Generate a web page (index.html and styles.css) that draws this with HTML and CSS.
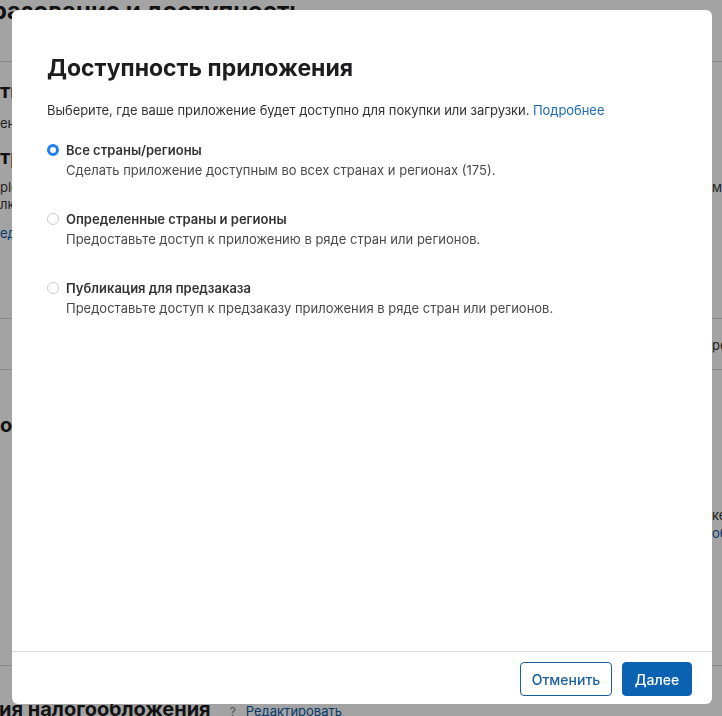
FILE: index.html
```html
<!DOCTYPE html>
<html lang="ru">
<head>
<meta charset="utf-8">
<title>Доступность приложения</title>
<link rel="stylesheet" href="styles.css">
</head>
<body>
<div class="page">
  <div class="page-head">
    <h1 class="page-title">Ценообразование и доступность</h1>
  </div>
  <div class="row row-a"><span class="sub-h">тн</span><span></span></div>
  <div class="row row-b"><span class="txt">ена</span><span></span></div>
  <div class="row row-c"><span class="sub-h">тр</span><span></span></div>
  <div class="row row-d"><span class="txt">ple</span><span class="txt">м</span></div>
  <div class="row row-e"><span class="txt">лк</span><span></span></div>
  <div class="row row-f"><span class="lnk">еда</span><span></span></div>
  <div class="row row-g"><span></span><span class="txt">ре</span></div>
  <div class="row row-h"><span class="sub-h">ос</span><span></span></div>
  <div class="row row-i"><span></span><span class="txt">ке</span></div>
  <div class="row row-j"><span></span><span class="lnk">об</span></div>
  <div class="row row-k">
    <span class="tax"><span class="tax-title">ия налогообложения</span><span class="help">?</span><span class="lnk edit">Редактировать</span></span>
    <span></span>
  </div>
</div>

<div class="overlay"></div>

<div class="modal" role="dialog" aria-labelledby="dlg-title">
  <div class="modal-body">
    <h2 class="title" id="dlg-title">Доступность приложения</h2>
    <p class="lead">Выберите, где ваше приложение будет доступно для покупки или загрузки. <a class="link" href="#">Подробнее</a></p>
    <div class="options">
      <label class="option">
        <span class="radio radio-on"></span>
        <span class="opt-text">
          <span class="opt-title">Все страны/регионы</span>
          <span class="opt-desc">Сделать приложение доступным во всех странах и регионах (175).</span>
        </span>
      </label>
      <label class="option">
        <span class="radio"></span>
        <span class="opt-text">
          <span class="opt-title">Определенные страны и регионы</span>
          <span class="opt-desc">Предоставьте доступ к приложению в ряде стран или регионов.</span>
        </span>
      </label>
      <label class="option">
        <span class="radio"></span>
        <span class="opt-text">
          <span class="opt-title">Публикация для предзаказа</span>
          <span class="opt-desc">Предоставьте доступ к предзаказу приложения в ряде стран или регионов.</span>
        </span>
      </label>
    </div>
  </div>
  <div class="modal-foot">
    <button class="btn btn-secondary" type="button">Отменить</button>
    <button class="btn btn-primary" type="button">Далее</button>
  </div>
</div>
</body>
</html>
```
FILE: styles.css
```css
* { box-sizing: border-box; }
html, body { margin: 0; padding: 0; }
body {
  width: 722px;
  height: 716px;
  overflow: hidden;
  background: #ffffff;
  font-family: Inter, "Noto Sans", "Liberation Sans", sans-serif;
  color: #1d1d1f;
}

/* ---------- background page ---------- */
.page { width: 722px; height: 716px; overflow: hidden; white-space: nowrap; }
.page-head {
  height: 62px;
  border-bottom: 1px solid #d2d2d7;
  overflow: hidden;
}
.page-title {
  margin: -4px 0 0 -100px;
  font-size: 24px;
  line-height: 30px;
  font-weight: 700;
}
.row {
  display: grid;
  grid-template-columns: 712px 1fr;
  overflow: hidden;
}
.sub-h { font-size: 20px; font-weight: 700; line-height: 24px; }
.txt { font-size: 13px; line-height: 18px; color: #333; }
.lnk { font-size: 13px; line-height: 18px; color: #0b5cab; }

.row-a { margin-top: 17px; height: 24px; }
.row-b { margin-top: 11px; height: 18px; }
.row-c { margin-top: 13px; height: 24px; }
.row-d { margin-top: 9px; height: 17px; }
.row-e { height: 18px; }
.row-f { margin-top: 11px; height: 18px; }
.row-g {
  margin-top: 76px;
  height: 52px;
  padding-top: 17px;
  border-top: 1px solid #d2d2d7;
  border-bottom: 1px solid #d2d2d7;
}
.row-h { margin-top: 43px; height: 24px; }
.row-i { margin-top: 69px; height: 18px; }
.row-j { height: 18px; }
.row-k {
  margin-top: 123px;
  border-top: 1px solid #d2d2d7;
  padding-top: 31px;
  height: 60px;
}
.tax { display: flex; align-items: baseline; }
.tax-title { font-size: 20px; font-weight: 700; line-height: 24px; margin-left: -1px; }
.help { font-size: 12px; color: #888; margin-left: 19px; }
.edit { font-size: 13px; margin-left: 10px; }

.overlay {
  position: fixed;
  inset: 0;
  background: rgba(0, 0, 0, 0.36);
}

/* ---------- modal ---------- */
.modal {
  position: fixed;
  left: 12px;
  top: 10px;
  width: 700px;
  height: 694px;
  background: #ffffff;
  border-radius: 6px;
  display: flex;
  flex-direction: column;
  overflow: hidden;
}
.modal-body {
  flex: 1;
  padding: 43px 35px 0;
}
.title {
  margin: 0;
  font-size: 23px;
  line-height: 30px;
  font-weight: 700;
  color: #1d1d1f;
}
.lead {
  margin: 18px 0 0;
  font-size: 13px;
  line-height: 18px;
  letter-spacing: -0.05px;
  color: #333333;
}
.link { color: #1f6bb5; text-decoration: none; }

.options {
  margin-top: 22px;
  display: flex;
  flex-direction: column;
  gap: 31px;
}
.option {
  display: grid;
  grid-template-columns: 19px 1fr;
  align-items: start;
}
.radio {
  width: 12px;
  height: 12px;
  margin-top: 3px;
  border-radius: 50%;
  border: 1px solid #c9c9cc;
  background: #fff;
}
.radio-on {
  border: 3.5px solid #1f7ff0;
  background: #ffffff;
}
.opt-text { display: flex; flex-direction: column; gap: 2px; }
.opt-title {
  font-size: 13px;
  line-height: 18px;
  font-weight: 600;
  color: #333333;
}
.opt-desc {
  font-size: 13px;
  line-height: 18px;
  color: #4a4a4a;
}

.modal-foot {
  border-top: 1px solid #dedee0;
  padding: 10px 20px 8px;
  display: flex;
  justify-content: flex-end;
  gap: 10px;
}
.btn {
  height: 34px;
  border-radius: 4px;
  font-family: Inter, "Noto Sans", "Liberation Sans", sans-serif;
  font-size: 14px;
  font-weight: 500;
  cursor: pointer;
}
.btn-secondary {
  width: 92px;
  background: #ffffff;
  border: 1px solid #1a5e9e;
  color: #1a5e9e;
}
.btn-primary {
  width: 70px;
  background: #0a62b0;
  border: 1px solid #0a62b0;
  color: #ffffff;
}
```
